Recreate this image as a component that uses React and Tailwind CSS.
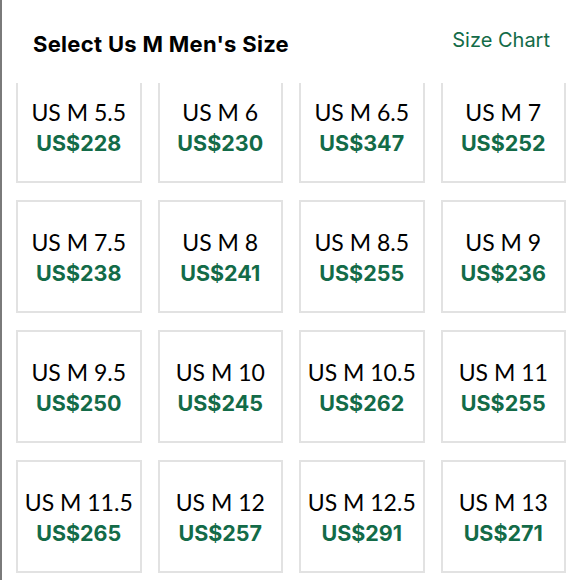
import React from 'react';

const sizes = [
  ['5.5', 228], ['6', 230], ['6.5', 347], ['7', 252],
  ['7.5', 238], ['8', 241], ['8.5', 255], ['9', 236],
  ['9.5', 250], ['10', 245], ['10.5', 262], ['11', 255],
  ['11.5', 265], ['12', 257], ['12.5', 291], ['13', 271],
];

const SizeCell = ({ size, price }) => (
  <button className="h-[113px] border-2 border-[#e2e2e2] bg-white flex flex-col items-center justify-center">
    <span className="text-[23px] leading-[32px] text-black" style={{ fontFamily: 'Lato, sans-serif' }}>US M {size}</span>
    <span className="text-[21.5px] leading-[30px] font-bold text-[#136b48]">US${price}</span>
  </button>
);

export default function App() {
  return (
    <div
      className="w-[580px] h-[580px] bg-white border-l-2 border-[#7a7a7a] overflow-hidden"
      style={{ fontFamily: 'Inter, "Open Sans", sans-serif' }}
    >
      <div className="flex items-start justify-between pl-[31px] pr-[30px] pt-[28px] h-[83px]">
        <h2 className="text-[22px] font-bold text-black leading-[32px] tracking-[0.3px]">Select Us M Men's Size</h2>
        <a className="text-[20px] text-[#136b48] leading-[28px] -mt-[2px]">Size Chart</a>
      </div>
      <div className="h-[497px] overflow-hidden">
        <div className="grid grid-cols-4 gap-x-[16px] gap-y-[17px] pl-[14px] pr-[14px] -mt-[13px]">
          {sizes.map(([s, p]) => (
            <SizeCell key={s} size={s} price={p} />
          ))}
        </div>
      </div>
    </div>
  );
}
